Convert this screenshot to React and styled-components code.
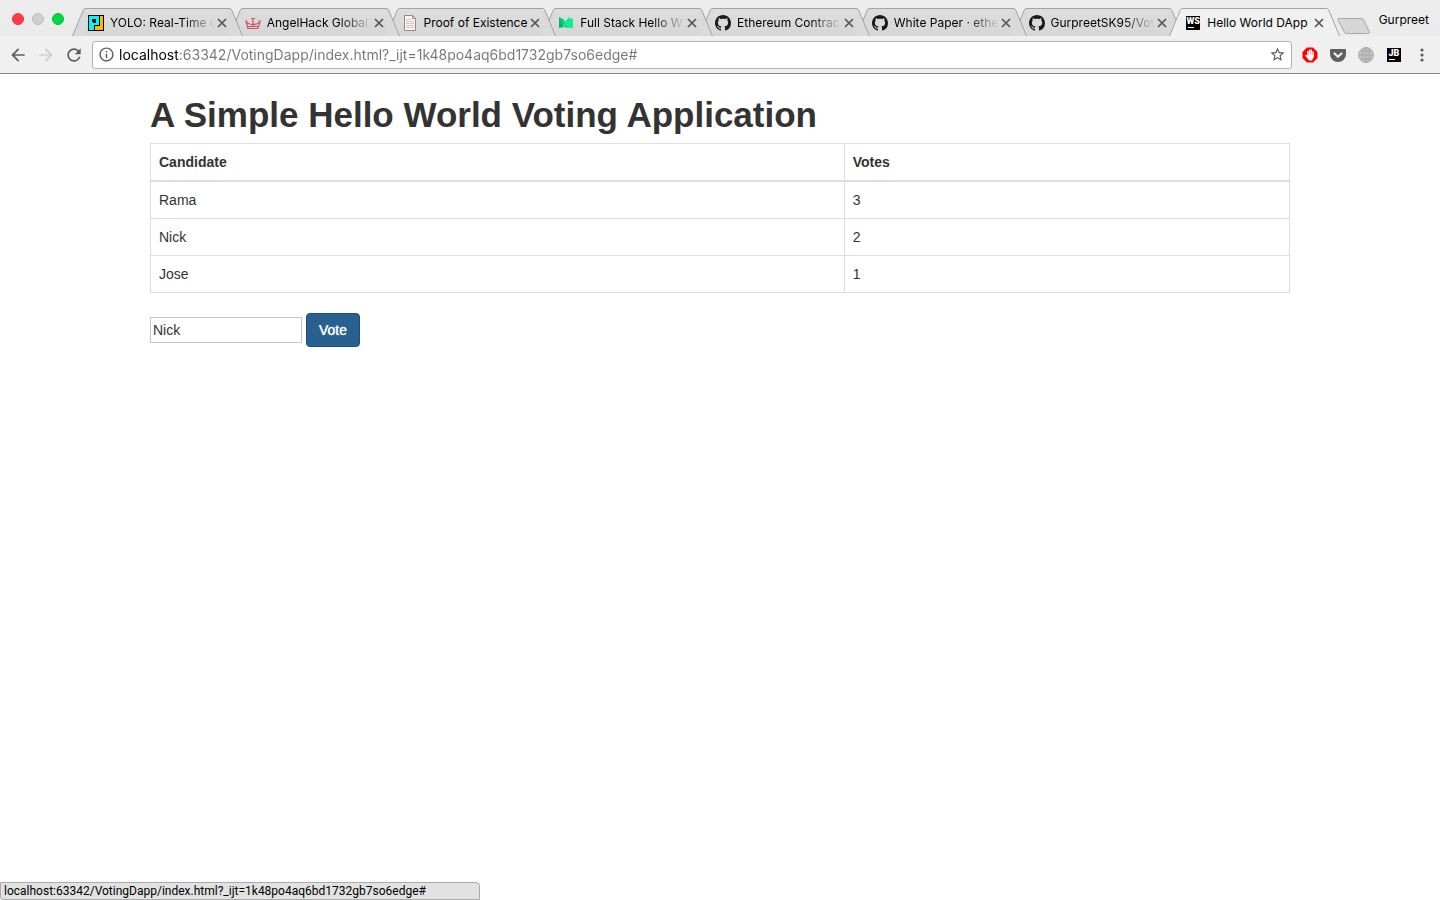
import React, { useState } from "react";
import styled, { createGlobalStyle, css } from "styled-components";
import { MdArrowBack, MdArrowForward, MdRefresh, MdInfoOutline, MdStarBorder } from "react-icons/md";

const ui = '"Inter", sans-serif';
const page = '"Liberation Sans", sans-serif';

const GlobalStyle = createGlobalStyle`
  * { box-sizing: border-box; }
  body { margin: 0; background: #fff; color: #333; font-family: ${page}; font-size: 14px; line-height: 20px; }
  button { font: inherit; border: 0; background: none; padding: 0; }
  svg { display: block; flex: none; }
`;

const Shell = styled.div`
  min-height: 100vh;
  display: flex;
  flex-direction: column;
`;

const TabStrip = styled.header`
  height: 36px;
  display: flex;
  background: linear-gradient(#ededed, #ebebeb);
  font-family: ${ui};
  font-size: 12px;
  color: #000;
`;

const WindowButtons = styled.div`
  display: flex;
  gap: 8px;
  width: 72px;
  padding: 13px 0 0 12px;
`;

const WindowButton = styled.button`
  width: 12px;
  height: 12px;
  border-radius: 50%;
  background: ${(p) => p.$color};
  border: 1px solid ${(p) => p.$edge};
`;

const TabList = styled.div`
  display: flex;
  flex: 1;
  min-width: 0;
  padding-top: 8px;
`;

const Tab = styled.div`
  display: flex;
  flex: 1 1 0;
  min-width: 0;
  height: 28px;
  position: relative;
  z-index: ${(p) => p.$level};
  margin-right: -14px;
  &:last-child { margin-right: 0; }
`;

const TabBody = styled.div`
  flex: 1;
  min-width: 0;
  display: flex;
  align-items: center;
  padding-left: 2px;
  border-top: 1px solid #a3a3a3;
  background: ${(p) => (p.$active ? "#f0f0f0" : "linear-gradient(#dedede, #d6d6d6)")};
`;

const TabTitle = styled.span`
  flex: 1;
  min-width: 0;
  margin-left: 6px;
  overflow: hidden;
  white-space: nowrap;
  ${(p) =>
    p.$fade &&
    css`
      mask-image: linear-gradient(to right, #000 calc(100% - 32px), transparent);
    `}
`;

const CloseButton = styled.button`
  width: 14px;
  height: 14px;
`;

const NewTab = styled.button`
  width: 36px;
  padding-top: 8px;
  margin-left: -4px;
`;

const Profile = styled.button`
  width: 68px;
  height: 40px;
  padding-right: 11px;
  text-align: right;
`;

const Toolbar = styled.nav`
  height: 38px;
  display: flex;
  align-items: center;
  padding: 0 10px 0 8px;
  background: #f0f0f0;
  border-bottom: 1px solid #858585;
`;

const NavButton = styled.button`
  width: 20px;
  height: 20px;
  margin-right: 8px;
  color: ${(p) => (p.$off ? "#cfcfcf" : "#5c5c5c")};
`;

const AddressBar = styled.form`
  flex: 1;
  height: 28px;
  display: flex;
  align-items: center;
  padding: 0 5px;
  background: #fff;
  border: 1px solid #b3b3b3;
  border-radius: 3px;
  color: #5c5c5c;
`;

const AddressInput = styled.input`
  flex: 1;
  min-width: 0;
  height: 20px;
  margin-left: 4px;
  padding: 0;
  border: 0;
  outline: 0;
  font-family: ${ui};
  font-size: 14px;
  background: linear-gradient(to right, #000 59px, #777 59px);
  background-clip: text;
  -webkit-text-fill-color: transparent;
`;

const Extensions = styled.div`
  display: flex;
  gap: 12px;
  margin-left: 10px;
`;

const ExtensionButton = styled.button`
  width: 16px;
  height: 16px;
  color: #5c5c5c;
`;

const Content = styled.main`
  flex: 1;
  width: calc(100% - 30px);
  max-width: 1140px;
  margin: 0 auto;
`;

const Heading = styled.h1`
  margin: 20px 0 8px;
  font-size: 35px;
  line-height: 41px;
  font-weight: 700;
`;

const ResultTable = styled.table`
  width: 100%;
  border-collapse: collapse;
  margin-bottom: 20px;
  th, td {
    border: 1px solid #ddd;
    padding: 8px;
    text-align: left;
    vertical-align: top;
  }
  thead th { border-bottom-width: 2px; }
  th:first-child { width: 60.9%; }
`;

const VoteForm = styled.form`
  display: flex;
  align-items: center;
  gap: 4px;
`;

const CandidateInput = styled.input`
  width: 152px;
  height: 26px;
  padding: 1px 2px;
  border: 1px solid #c8c8c8;
  font: inherit;
  color: #333;
`;

const VoteButton = styled.button`
  height: 34px;
  padding: 0 12px;
  border: 1px solid #204d74;
  border-radius: 4px;
  background: #286090;
  color: #fff;
  text-shadow: 0 0 1px #fff;
`;

const StatusBar = styled.footer`
  width: 480px;
  max-width: 100%;
  height: 18px;
  padding-left: 3px;
  border: 1px solid #ababab;
  border-radius: 0 4px 0 3px;
  background: #e2e2e2;
  color: #000;
  font-family: Roboto, sans-serif;
  font-size: 12px;
  line-height: 16px;
`;

const Slant = ({ active, right }) => {
  const fill = active ? "#f0f0f0" : "#dadada";
  return (
    <svg width="14" height="28" viewBox="0 0 14 28" aria-hidden="true">
      <g transform={right ? "translate(14 0) scale(-1 1)" : undefined}>
        <path d="M0.5 28 L11.5 1.5 Q12 .5 14 .5 V28Z" fill={fill} />
        <path d="M0.5 28 L11.5 1.5 Q12 .5 14 .5" fill="none" stroke="#a3a3a3" />
      </g>
    </svg>
  );
};

const CloseIcon = () => (
  <svg width="14" height="14" viewBox="0 0 14 14">
    <path d="m3 3 8 8M11 3l-8 8" stroke="#555" strokeWidth="1.7" />
  </svg>
);

const YoloIcon = () => (
  <svg width="16" height="16" viewBox="0 0 16 16" shapeRendering="crispEdges">
    <path fill="#000" d="M0 0h16v16H0z" />
    <path fill="#00f6ff" d="M1 1h10v9H6v5H1z" />
    <path fill="#ffb800" d="M12 1h3v14H7v-4h5z" />
    <path fill="#000" d="M4 4h4v4H4z" />
    <path fill="#00f6ff" d="M4 7h1v1H4z" />
  </svg>
);

const CrownIcon = () => (
  <svg width="16" height="16" viewBox="0 0 16 16" fill="none" stroke="#d2505f" strokeWidth="1.2">
    <path d="M3 13.5 1 6.5Q3 9.5 8 9.5T15 6.5l-2 7zM8 3v8M3 11.5h10" />
    <path d="M6 3.5h4M0 6h2.5M13.5 6H16" />
  </svg>
);

const PageIcon = () => (
  <svg width="16" height="16" viewBox="0 0 16 16" fill="none" stroke="#9b8883">
    <path d="M2.5 .5h8l3 3v12h-11z" fill="#fbf7f4" />
    <path d="M10.5 .5v3h3" />
    <path d="M4 4.5h5M4 6.5h8M4 8.5h8M4 10.5h8M4 12.5h8" stroke="#d6c6c0" />
  </svg>
);

const MediumIcon = () => (
  <svg width="16" height="16" viewBox="0 0 16 16">
    <path d="M1 2 5.5 4.5v7.5L1 13z" fill="#00b56a" />
    <path d="M1 2 6 5 10.5 13 5.5 12z" fill="#00d47e" />
    <path d="M5 10 10.5 2.5 15 4v9L10.5 13 9 9.5 5 12.5z" fill="#10ed8d" />
  </svg>
);

const GithubIcon = () => (
  <svg width="16" height="16" viewBox="0 0 16 16" fill="#1b1b1b">
    <path d="M8 0C3.58 0 0 3.58 0 8c0 3.54 2.29 6.53 5.47 7.59.4.07.55-.17.55-.38 0-.19-.01-.82-.01-1.49-2.01.37-2.53-.49-2.69-.94-.09-.23-.48-.94-.82-1.13-.28-.15-.68-.52-.01-.53.63-.01 1.08.58 1.23.82.72 1.21 1.87.87 2.33.66.07-.52.28-.87.51-1.07-1.78-.2-3.64-.89-3.64-3.95 0-.87.31-1.59.82-2.15-.08-.2-.36-1.02.08-2.12 0 0 .67-.21 2.2.82.64-.18 1.32-.27 2-.27s1.36.09 2 .27c1.53-1.04 2.2-.82 2.2-.82.44 1.1.16 1.92.08 2.12.51.56.82 1.27.82 2.15 0 3.07-1.87 3.75-3.65 3.95.29.25.54.73.54 1.48 0 1.07-.01 1.93-.01 2.2 0 .21.15.46.55.38A8.01 8.01 0 0 0 16 8c0-4.42-3.58-8-8-8z" />
  </svg>
);

const LetterMark = styled.span`
  display: block;
  flex: none;
  width: 14px;
  height: 14px;
  margin: 1px;
  padding-top: 1px;
  background: #000;
  color: #fff;
  font: 900 9px/9px Roboto, sans-serif;
  text-align: center;
  white-space: nowrap;
  &::after {
    content: "";
    display: block;
    width: 6px;
    height: 1px;
    margin: 1px 0 0 2px;
    background: #fff;
  }
`;

const BlockerIcon = () => (
  <svg width="16" height="16" viewBox="0 0 16 16">
    <path d="M5 .5h6L15.5 5v6L11 15.5H5L.5 11V5z" fill="#f00" />
    <path d="M5.5 8h6v2.5L10 13.5H7L5.5 11z" fill="#fff" />
    <path d="M6 9V4.5M7.7 9V3M9.4 9V3.2M11.1 9.5V5M6.5 11.5 4 8.5" stroke="#fff" strokeWidth="1.4" strokeLinecap="round" />
  </svg>
);

const PocketIcon = () => (
  <svg width="16" height="16" viewBox="0 0 16 16">
    <path d="M1 2h14q1 0 1 1v4a8 8 0 0 1-16 0V3q0-1 1-1z" fill="#5f5f5f" />
    <path d="m4.5 6.5 3.5 3.3 3.5-3.3" fill="none" stroke="#f0f0f0" strokeWidth="2.2" strokeLinecap="round" strokeLinejoin="round" />
  </svg>
);

const GlobeIcon = () => (
  <svg width="16" height="16" viewBox="0 0 16 16" fill="none" stroke="#a3a3a3" strokeWidth=".8">
    <circle cx="8" cy="8" r="7.5" fill="#c4c4c4" />
    <ellipse cx="8" cy="8" rx="3.5" ry="7.5" />
    <path d="M8 .5v15M.5 8h15M2 4h12M2 12h12" />
  </svg>
);

const MenuIcon = () => (
  <svg width="16" height="16" viewBox="0 0 16 16" fill="#5c5c5c">
    <circle cx="8" cy="3" r="1.6" />
    <circle cx="8" cy="8" r="1.6" />
    <circle cx="8" cy="13" r="1.6" />
  </svg>
);

const tabs = [
  { title: "YOLO: Real-Time O", icon: <YoloIcon />, fade: true },
  { title: "AngelHack Global", icon: <CrownIcon />, fade: true },
  { title: "Proof of Existence", icon: <PageIcon /> },
  { title: "Full Stack Hello W", icon: <MediumIcon />, fade: true },
  { title: "Ethereum Contrac", icon: <GithubIcon />, fade: true },
  { title: "White Paper · ethe", icon: <GithubIcon />, fade: true },
  { title: "GurpreetSK95/Vot", icon: <GithubIcon />, fade: true },
  { title: "Hello World DApp", icon: <LetterMark>WS</LetterMark>, active: true },
];

const results = [["Rama", 3], ["Nick", 2], ["Jose", 1]];
const address = "localhost:63342/VotingDapp/index.html?_ijt=1k48po4aq6bd1732gb7so6edge#";

export default function App() {
  const [url, setUrl] = useState(address);
  const [candidate, setCandidate] = useState("Nick");
  const stop = (e) => e.preventDefault();
  return (
    <Shell>
      <GlobalStyle />
      <TabStrip>
        <WindowButtons>
          <WindowButton aria-label="Close window" $color="#ff3b47" $edge="#e9353f" />
          <WindowButton aria-label="Minimize window" $color="#cfcfcf" $edge="#bdbdbd" />
          <WindowButton aria-label="Zoom window" $color="#00d742" $edge="#00c03a" />
        </WindowButtons>
        <TabList>
          {tabs.map((t, i) => (
            <Tab key={t.title} $level={t.active ? 20 : 10 - i}>
              <Slant active={t.active} />
              <TabBody $active={t.active}>
                {t.icon}
                <TabTitle $fade={t.fade}>{t.title}</TabTitle>
                <CloseButton aria-label={`Close ${t.title}`}><CloseIcon /></CloseButton>
              </TabBody>
              <Slant active={t.active} right />
            </Tab>
          ))}
        </TabList>
        <NewTab aria-label="New tab">
          <svg width="36" height="24" viewBox="0 0 36 24">
            <path d="M3 8.5h22q2 0 2.7 1.5l5.5 11.5q.6 2-1.7 2H11q-2 0-2.8-1.5L2 10Q1.5 8.5 3 8.5z" fill="#d6d6d6" stroke="#a8a8a8" />
          </svg>
        </NewTab>
        <Profile>Gurpreet</Profile>
      </TabStrip>
      <Toolbar>
        <NavButton aria-label="Back"><MdArrowBack size={20} /></NavButton>
        <NavButton aria-label="Forward" $off><MdArrowForward size={20} /></NavButton>
        <NavButton aria-label="Reload"><MdRefresh size={20} /></NavButton>
        <AddressBar onSubmit={stop}>
          <MdInfoOutline size={17} />
          <AddressInput aria-label="Address" value={url} spellCheck={false} onChange={(e) => setUrl(e.target.value)} />
          <MdStarBorder size={17} />
        </AddressBar>
        <Extensions>
          <ExtensionButton aria-label="Ad blocker"><BlockerIcon /></ExtensionButton>
          <ExtensionButton aria-label="Pocket"><PocketIcon /></ExtensionButton>
          <ExtensionButton aria-label="Globe"><GlobeIcon /></ExtensionButton>
          <ExtensionButton aria-label="JetBrains"><LetterMark>JB</LetterMark></ExtensionButton>
          <ExtensionButton aria-label="Menu"><MenuIcon /></ExtensionButton>
        </Extensions>
      </Toolbar>
      <Content>
        <Heading>A Simple Hello World Voting Application</Heading>
        <ResultTable>
          <thead>
            <tr><th>Candidate</th><th>Votes</th></tr>
          </thead>
          <tbody>
            {results.map(([name, votes]) => (
              <tr key={name}><td>{name}</td><td>{votes}</td></tr>
            ))}
          </tbody>
        </ResultTable>
        <VoteForm onSubmit={stop}>
          <CandidateInput aria-label="Candidate" value={candidate} onChange={(e) => setCandidate(e.target.value)} />
          <VoteButton type="submit">Vote</VoteButton>
        </VoteForm>
      </Content>
      <StatusBar>{address}</StatusBar>
    </Shell>
  );
}
